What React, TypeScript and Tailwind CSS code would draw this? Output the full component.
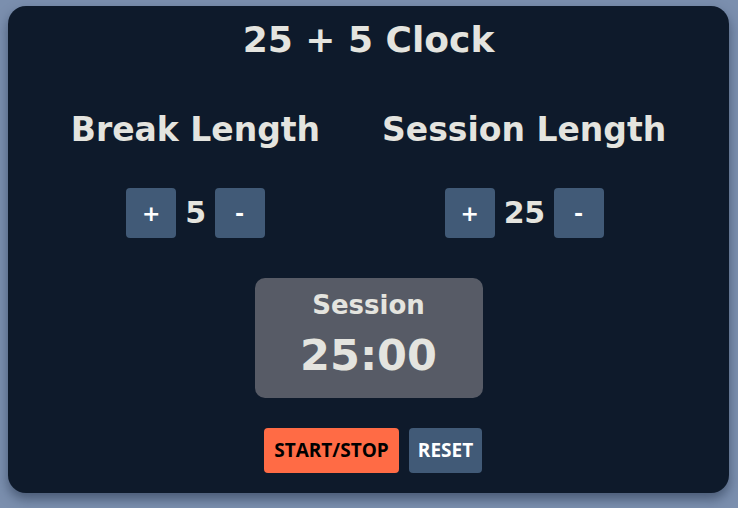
import React from "react";

const mont = { fontFamily: '"DejaVu Sans", "Open Sans", sans-serif' };

function Counter({ label, value }: { label: string; value: number }) {
  return (
    <div className="flex flex-col items-center">
      <h2 className="text-[33px] font-bold leading-[40px] text-[#e4e4df]">{label}</h2>
      <div className="mt-[38px] flex items-center gap-[9px]">
        <button className="flex h-[50px] w-[50px] items-center justify-center rounded-[4px] bg-[#415a77] text-[22px] font-bold text-white">+</button>
        <span className="text-[30px] font-bold leading-none tracking-[-0.5px] text-[#e4e4df]">{value}</span>
        <button className="flex h-[50px] w-[50px] items-center justify-center rounded-[4px] bg-[#415a77] text-[22px] font-bold text-white">-</button>
      </div>
    </div>
  );
}

export default function App() {
  return (
    <div className="min-h-[508px] bg-[#7b8fae] pl-2 pr-[9px] pt-[6px] pb-[15px]" style={mont}>
      <div className="flex h-[487px] flex-col items-center rounded-[18px] bg-[#0e1a2b] pt-[14px] shadow-[0_6px_12px_rgba(40,55,80,0.6)]">
        <h1 className="text-[36px] font-bold leading-[40px] text-[#e4e4df]">25 + 5 Clock</h1>
        <div className="mt-[50px] flex gap-[62px]">
          <Counter label="Break Length" value={5} />
          <Counter label="Session Length" value={25} />
        </div>
        <div className="mt-[40px] flex h-[120px] w-[228px] flex-col items-center justify-center rounded-[10px] bg-[#575b66]">
          <div className="text-[26px] font-bold leading-[34px] text-[#e4e4df]">Session</div>
          <div className="text-[43px] font-bold leading-[66px] text-[#e4e4df]">25:00</div>
        </div>
        <div className="ml-[9px] mt-[30px] flex gap-[10px]" style={{ fontFamily: '"Open Sans", sans-serif' }}>
          <button className="h-[45px] w-[135px] rounded-[4px] bg-[#ff6b45] text-[19px] font-bold text-black">START/STOP</button>
          <button className="h-[45px] w-[73px] rounded-[4px] bg-[#415a77] text-[19px] font-bold text-white">RESET</button>
        </div>
      </div>
    </div>
  );
}
